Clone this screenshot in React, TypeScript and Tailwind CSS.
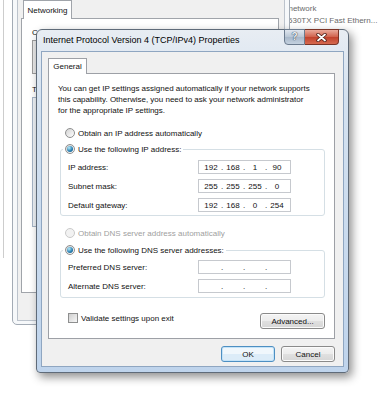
import { Fragment, type ReactNode } from "react";

const Radio = ({ checked = false, disabled = false }: { checked?: boolean; disabled?: boolean }) => (
  <span
    className={`flex h-[10px] w-[10px] shrink-0 items-center justify-center rounded-full border ${
      disabled
        ? "border-[#cacaca] bg-[#f2f2f2]"
        : "border-[#8e8f8f] bg-[linear-gradient(135deg,#d2d2d2,#ffffff)]"
    }`}
  >
    {checked && (
      <span className="h-[6px] w-[6px] rounded-full bg-[radial-gradient(circle_at_35%_30%,#b9ecfb,#2d84b6_55%,#0f4c74)]" />
    )}
  </span>
);

const Button = ({ children, primary = false, className = "" }: { children: ReactNode; primary?: boolean; className?: string }) => (
  <div
    className={`flex h-[16px] items-center justify-center rounded-[3px] border ${
      primary
        ? "border-[#4d8fc2] bg-[linear-gradient(to_bottom,#f0f7fc_50%,#dcecf8_50%)] shadow-[inset_0_0_0_1px_#c4e3f8]"
        : "border-[#8a8a8a] bg-[linear-gradient(to_bottom,#f4f4f4_0%,#ececec_50%,#e0e0e0_50%,#d6d6d6_100%)] shadow-[inset_0_0_0_1px_#fbfbfb]"
    } ${className}`}
  >
    {children}
  </div>
);

const IpField = ({ parts }: { parts: string[] }) => (
  <div className="flex h-[14px] w-[93px] items-center border border-[#c6c9ce] bg-white pl-[3px]">
    {parts.map((p, i) => (
      <Fragment key={i}>
        <span className="w-[18px] text-center">{p}</span>
        {i < 3 && <span className="w-[4px] text-center">.</span>}
      </Fragment>
    ))}
  </div>
);

const FieldRow = ({ label, parts }: { label: string; parts: string[] }) => (
  <div className="flex h-[14px] items-center">
    <span className="w-[137px] pl-[7px]">{label}</span>
    <IpField parts={parts} />
  </div>
);

export default function App() {
  return (
    <div className="relative h-[400px] w-[384px] overflow-hidden bg-white font-['Liberation_Sans',Arial,sans-serif] text-[8px] leading-[11px] text-[#111]">
      {/* Network Connections window */}
      <div className="absolute left-[3px] top-[-10px] h-[268px] w-[420px] border-l border-[#cdcdcd] bg-white">
        <div className="ml-[240px] flex flex-col pt-[1px] leading-[12px] text-[#6a6a6a]">
          <span className="text-[#111]">Local Area Connection 2</span>
          <span>Unidentified network</span>
          <span>D-Link DFE-530TX PCI Fast Ethern...</span>
        </div>
      </div>

      {/* Ethernet Properties window */}
      <div className="absolute left-[12px] top-[-20px] h-[345px] w-[278px] rounded-b-[5px] border border-[#a3abb5] bg-[#f6f8fa] px-[4px] pb-[3px] pt-[18px]">
        <div className="flex h-full flex-col border border-[#bcc3cc] bg-[#f0f0f0] px-[3px]">
          <div className="relative z-10 mb-[-1px] ml-[2px] flex h-[19px] w-[49px] items-center justify-center border border-b-0 border-[#a0a4aa] bg-white">
            Networking
          </div>
          <div className="h-[275px] w-[258px] border border-[#a0a4aa] bg-white px-[10px] pt-[8px]">
            <div>Connect using:</div>
            <div className="mt-[2px] h-[34px] border border-[#9d9d9d] bg-[#e9e9e9]" />
            <div className="mt-[10px]">This connection uses the following items:</div>
            <div className="mt-[2px] h-[130px] border border-[#a7b6c8] bg-[#eef2f7]" />
          </div>
        </div>
      </div>

      {/* IPv4 Properties dialog */}
      <div className="absolute left-[36px] top-[29px] flex h-[344px] w-[313px] flex-col rounded-b-[4px] rounded-t-[6px] border border-[#5f6b79] bg-[linear-gradient(to_bottom,#e8edf3,#d5e2f0_20%,#bfd4ec)] px-[4px] pb-[5px] shadow-[3px_4px_10px_rgba(0,0,0,0.45)]">
        <div className="flex h-[21px] items-start justify-between">
          <span className="ml-[2px] self-center text-[9px] text-black">
            Internet Protocol Version 4 (TCP/IPv4) Properties
          </span>
          <div className="mr-[5px] mt-[-1px] flex">
            <div className="flex h-[16px] w-[21px] items-center justify-center rounded-bl-[4px] border border-[#6b7b8e] bg-[linear-gradient(to_bottom,#dfe6ee,#b9c6d5_50%,#a7b7c9_50%,#c4d1df)] text-[10px] font-bold leading-none text-[#eef2f6] [text-shadow:0_0_1px_#2d3b4d,0_0_1px_#2d3b4d]">
              ?
            </div>
            <div className="flex h-[16px] w-[34px] items-center justify-center rounded-br-[4px] border border-l-0 border-[#7a3326] bg-[linear-gradient(to_bottom,#e9a99a,#d0604b_50%,#c0402b_50%,#d66a50)]">
              <svg width="11" height="9" viewBox="0 0 11 9">
                <path d="M2 1.5 L9 7.5 M9 1.5 L2 7.5" stroke="#4a1a12" strokeWidth="3.4" strokeLinecap="round" />
                <path d="M2 1.5 L9 7.5 M9 1.5 L2 7.5" stroke="#ffffff" strokeWidth="1.8" strokeLinecap="round" />
              </svg>
            </div>
          </div>
        </div>

        <div className="flex flex-1 flex-col border border-[#8fa6c1] bg-[#f0f0f0] pl-[6px] pr-[8px] pt-[6px]">
          <div className="relative z-10 mb-[-1px] flex h-[16px] w-[39px] items-center justify-center border border-b-0 border-[#9da0a6] bg-white">
            General
          </div>
          <div className="flex h-[266px] flex-col border border-[#9da0a6] bg-white">
            <p className="whitespace-nowrap px-[9px] pt-[9px]">
              You can get IP settings assigned automatically if your network supports
              <br />
              this capability. Otherwise, you need to ask your network administrator
              <br />
              for the appropriate IP settings.
            </p>

            <div className="ml-[16px] mt-[10px] flex h-[14px] items-center gap-[3px]">
              <Radio />
              <span>Obtain an IP address automatically</span>
            </div>
            <div className="relative z-10 ml-[14px] mt-[2px] flex h-[14px] w-fit items-center gap-[3px] bg-white px-[2px]">
              <Radio checked />
              <span>Use the following IP address:</span>
            </div>
            <div className="ml-[11px] mr-[9px] mt-[-7px] flex flex-col gap-[5px] rounded-[3px] border border-[#d5dfe5] pb-[3px] pt-[10px]">
              <FieldRow label="IP address:" parts={["192", "168", "1", "90"]} />
              <FieldRow label="Subnet mask:" parts={["255", "255", "255", "0"]} />
              <FieldRow label="Default gateway:" parts={["192", "168", "0", "254"]} />
            </div>

            <div className="ml-[16px] mt-[10px] flex h-[14px] items-center gap-[3px] text-[#a0a0a0]">
              <Radio disabled />
              <span>Obtain DNS server address automatically</span>
            </div>
            <div className="relative z-10 ml-[14px] mt-[3px] flex h-[14px] w-fit items-center gap-[3px] bg-white px-[2px]">
              <Radio checked />
              <span>Use the following DNS server addresses:</span>
            </div>
            <div className="ml-[11px] mr-[9px] mt-[-7px] flex flex-col gap-[5px] rounded-[3px] border border-[#d5dfe5] pb-[4px] pt-[9px]">
              <FieldRow label="Preferred DNS server:" parts={["", "", "", ""]} />
              <FieldRow label="Alternate DNS server:" parts={["", "", "", ""]} />
            </div>

            <div className="ml-[19px] mr-[9px] mt-[15px] flex items-start justify-between">
              <div className="flex h-[10px] items-center gap-[3px]">
                <span className="h-[10px] w-[10px] border border-[#8e8f8f] bg-[linear-gradient(135deg,#cfcfcf,#f7f7f7)]" />
                <span>Validate settings upon exit</span>
              </div>
              <Button className="w-[65px]">Advanced...</Button>
            </div>
          </div>

          <div className="mt-[7px] flex justify-end gap-[6px]">
            <Button primary className="w-[54px]">OK</Button>
            <Button className="w-[54px]">Cancel</Button>
          </div>
        </div>
      </div>
    </div>
  );
}
